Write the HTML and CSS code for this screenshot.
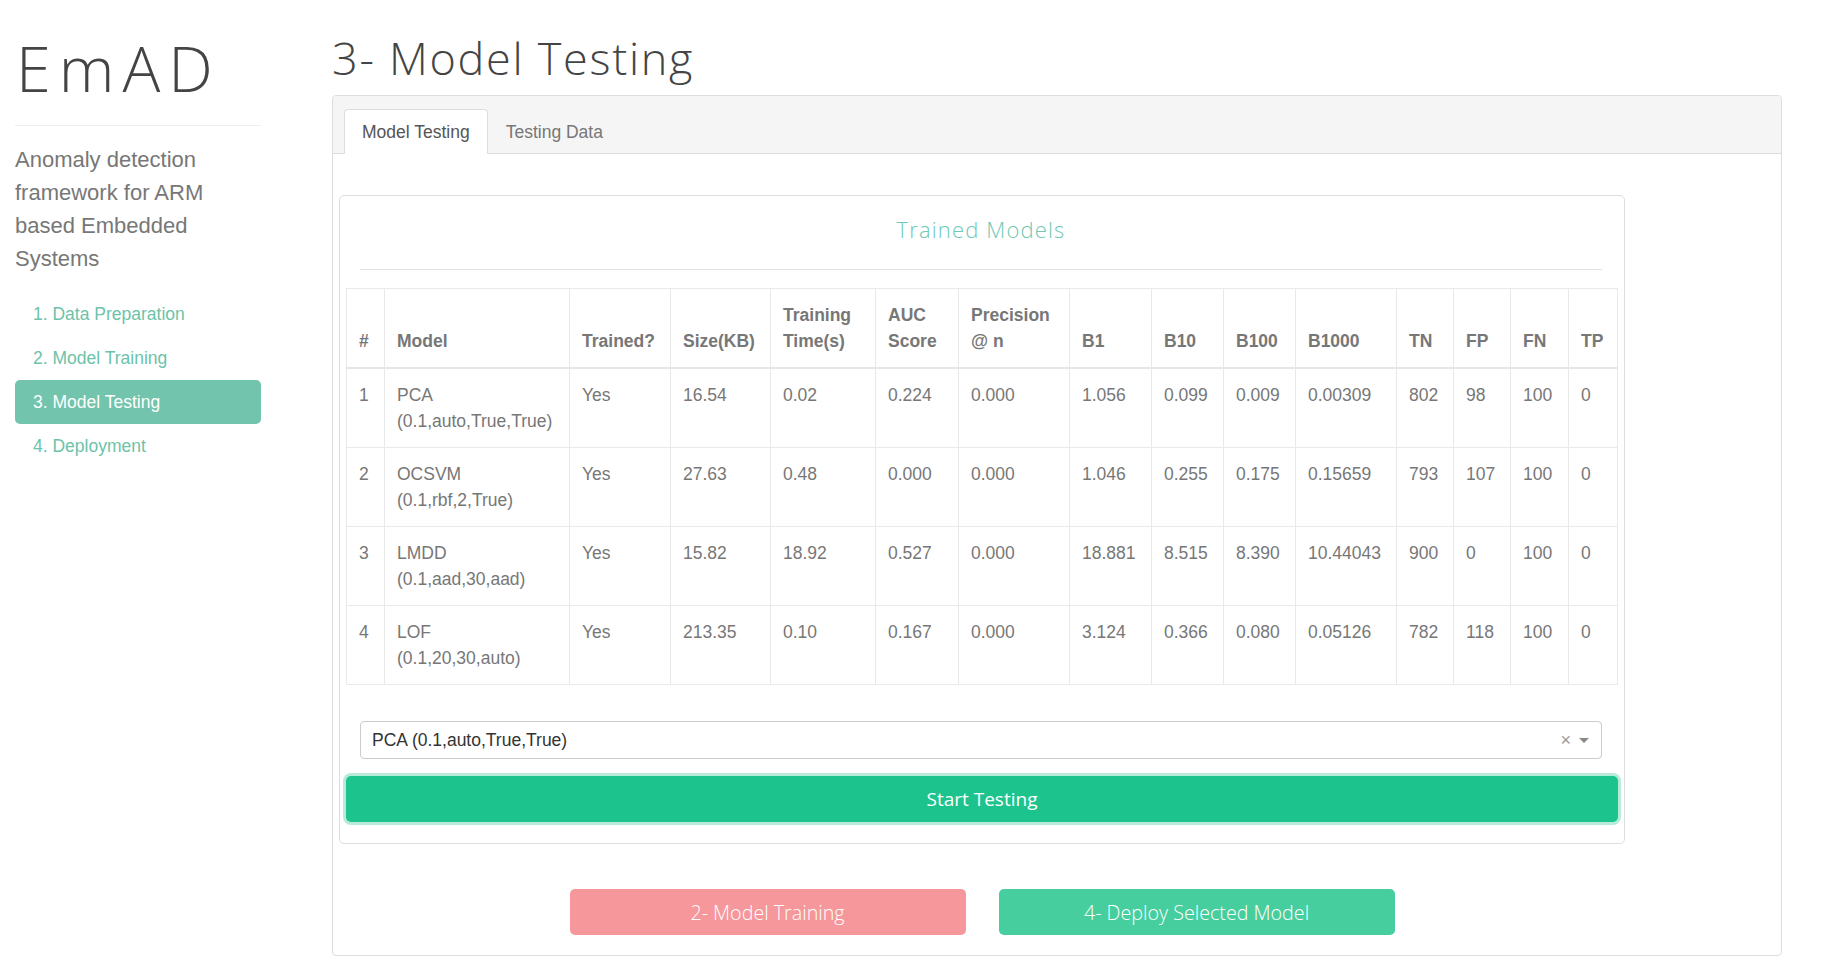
FILE: index.html
```html
<!DOCTYPE html>
<html lang="en">
<head>
<meta charset="utf-8">
<title>EmAD - Model Testing</title>
<link rel="stylesheet" href="styles.css">
</head>
<body>
<div class="page">
  <aside class="sidebar">
    <h1 class="brand">EmAD</h1>
    <hr class="brand-rule">
    <p class="tagline">Anomaly detection framework for ARM based Embedded Systems</p>
    <ul class="steps">
      <li><a class="step" href="#">1. Data Preparation</a></li>
      <li><a class="step" href="#">2. Model Training</a></li>
      <li><a class="step active" href="#">3. Model Testing</a></li>
      <li><a class="step" href="#">4. Deployment</a></li>
    </ul>
  </aside>
  <main class="main">
    <h2 class="page-title">3- Model Testing</h2>
    <section class="panel">
      <div class="tabs">
        <span class="tab active">Model Testing</span>
        <span class="tab">Testing Data</span>
      </div>
      <div class="panel-body">
        <div class="content">
          <div class="card">
            <h3 class="card-title">Trained Models</h3>
            <hr class="card-rule">
            <table class="models">
              <colgroup>
                <col class="c-idx"><col class="c-model"><col class="c-trained"><col class="c-size"><col class="c-time"><col class="c-auc"><col class="c-prec"><col class="c-b1"><col class="c-b10"><col class="c-b100"><col class="c-b1000"><col class="c-tn"><col class="c-fp"><col class="c-fn"><col class="c-tp">
              </colgroup>
              <thead>
                <tr>
                  <th>#</th><th>Model</th><th>Trained?</th><th>Size(KB)</th><th>Training Time(s)</th><th>AUC Score</th><th>Precision @ n</th><th>B1</th><th>B10</th><th>B100</th><th>B1000</th><th>TN</th><th>FP</th><th>FN</th><th>TP</th>
                </tr>
              </thead>
              <tbody>
                <tr>
                  <td>1</td><td>PCA<br>(0.1,auto,True,True)</td><td>Yes</td><td>16.54</td><td>0.02</td><td>0.224</td><td>0.000</td><td>1.056</td><td>0.099</td><td>0.009</td><td>0.00309</td><td>802</td><td>98</td><td>100</td><td>0</td>
                </tr>
                <tr>
                  <td>2</td><td>OCSVM<br>(0.1,rbf,2,True)</td><td>Yes</td><td>27.63</td><td>0.48</td><td>0.000</td><td>0.000</td><td>1.046</td><td>0.255</td><td>0.175</td><td>0.15659</td><td>793</td><td>107</td><td>100</td><td>0</td>
                </tr>
                <tr>
                  <td>3</td><td>LMDD<br>(0.1,aad,30,aad)</td><td>Yes</td><td>15.82</td><td>18.92</td><td>0.527</td><td>0.000</td><td>18.881</td><td>8.515</td><td>8.390</td><td>10.44043</td><td>900</td><td>0</td><td>100</td><td>0</td>
                </tr>
                <tr>
                  <td>4</td><td>LOF<br>(0.1,20,30,auto)</td><td>Yes</td><td>213.35</td><td>0.10</td><td>0.167</td><td>0.000</td><td>3.124</td><td>0.366</td><td>0.080</td><td>0.05126</td><td>782</td><td>118</td><td>100</td><td>0</td>
                </tr>
              </tbody>
            </table>
            <div class="select">
              <span class="select-value">PCA (0.1,auto,True,True)</span>
              <span class="select-clear">×</span>
              <span class="select-caret"></span>
            </div>
            <button class="btn-start" type="button">Start Testing</button>
          </div>
          <div class="actions">
            <button class="btn btn-back" type="button">2- Model Training</button>
            <button class="btn btn-deploy" type="button">4- Deploy Selected Model</button>
          </div>
        </div>
      </div>
    </section>
  </main>
</div>
</body>
</html>
```
FILE: styles.css
```css
* { box-sizing: border-box; }

html, body {
  margin: 0;
  padding: 0;
  background: #fff;
}

body {
  font-family: "Liberation Sans", Arial, sans-serif;
  font-size: 17.5px;
  color: #333;
}

.page {
  display: flex;
  align-items: flex-start;
}

/* ---------- sidebar ---------- */
.sidebar {
  flex: none;
  width: 261px;
  padding-left: 15px;
}

.brand {
  margin: 38px 0 0;
  font-family: "Open Sans", Inter, sans-serif;
  font-weight: 300;
  font-size: 63px;
  line-height: 60px;
  letter-spacing: 8px;
  color: #444;
  padding-left: 1px;
}

.brand-rule {
  margin: 27px 0 0;
  border: 0;
  border-top: 1px solid #eee;
  height: 0;
}

.tagline {
  margin: 17px 0 0;
  font-size: 22px;
  line-height: 33px;
  color: #777;
}

.steps {
  list-style: none;
  margin: 17px 0 0;
  padding: 0;
}

.step {
  display: block;
  height: 44px;
  line-height: 44px;
  padding: 0 18px;
  font-size: 17.5px;
  color: #6cc3a9;
  text-decoration: none;
  border-radius: 5px;
}

.step.active {
  background: #72c4ac;
  color: #fff;
}

/* ---------- main ---------- */
.main {
  flex: none;
  margin-left: 71px;
  width: 1450px;
}

.page-title {
  margin: 35px 0 15px;
  font-family: "Open Sans", Inter, sans-serif;
  font-weight: 300;
  font-size: 45px;
  line-height: 45px;
  letter-spacing: 1.7px;
  color: #444;
}

.panel {
  border: 1px solid #ddd;
  border-radius: 4px;
  overflow: hidden;
}

.tabs {
  display: flex;
  padding: 13px 11px 0;
  background: #f5f5f5;
  border-bottom: 1px solid #ddd;
}

.tab {
  height: 45px;
  margin-bottom: -1px;
  padding: 0 17px;
  line-height: 44px;
  font-size: 17.5px;
  color: #777;
  border: 1px solid transparent;
  border-radius: 4px 4px 0 0;
}

.tab.active {
  background: #fff;
  color: #555;
  border-color: #ddd;
  border-bottom-color: #fff;
}

.panel-body {
  padding: 41px 6px 20px;
}

.content {
  width: 1286px;
}

.card {
  border: 1px solid #ddd;
  border-radius: 5px;
  padding: 18px 22px 21px 20px;
}

.card-title {
  margin: 0;
  text-align: center;
  font-family: "Open Sans", Inter, sans-serif;
  font-weight: 300;
  font-size: 22px;
  line-height: 30px;
  letter-spacing: 1.15px;
  color: #6fc8b3;
}

.card-rule {
  margin: 25px 0 0;
  border: 0;
  border-top: 1px solid #e2e2e2;
  height: 0;
}

/* ---------- table ---------- */
.models {
  margin: 18px -16px 0 -14px;
  width: 1271px;
  table-layout: fixed;
  border-collapse: collapse;
  color: #777;
}

.c-idx { width: 38px; }
.c-model { width: 185px; }
.c-trained { width: 101px; }
.c-size { width: 100px; }
.c-time { width: 105px; }
.c-auc { width: 83px; }
.c-prec { width: 111px; }
.c-b1 { width: 82px; }
.c-b10 { width: 72px; }
.c-b100 { width: 72px; }
.c-b1000 { width: 101px; }
.c-tn { width: 57px; }
.c-fp { width: 57px; }
.c-fn { width: 58px; }
.c-tp { width: 49px; }

.models th,
.models td {
  border: 1px solid #e9e9e9;
  padding: 13px 11px 13px 12px;
  line-height: 26px;
  text-align: left;
  font-size: 17.5px;
}

.models th {
  vertical-align: bottom;
  font-weight: bold;
  border-bottom: 2px solid #e6e6e6;
}

.models td {
  vertical-align: top;
}

/* ---------- select ---------- */
.select {
  margin-top: 36px;
  height: 38px;
  display: flex;
  align-items: center;
  padding: 0 12px 0 11px;
  border: 1px solid #ccc;
  border-radius: 4px;
}

.select-value {
  flex: 1;
  color: #333;
}

.select-clear {
  color: #999;
  font-size: 18px;
  margin-right: 8px;
}

.select-caret {
  width: 0;
  height: 0;
  border-left: 5px solid transparent;
  border-right: 5px solid transparent;
  border-top: 5px solid #888;
}

/* ---------- buttons ---------- */
.btn-start {
  display: block;
  margin: 17px -16px 0 -14px;
  width: calc(100% + 30px);
  height: 46px;
  border: 0;
  border-radius: 5px;
  background: #1dc38d;
  box-shadow: 0 0 0 3px #b8eadb;
  color: #fff;
  font-family: "Open Sans", Inter, sans-serif;
  font-weight: 400;
  font-size: 19px;
}

.actions {
  display: flex;
  justify-content: center;
  gap: 33px;
  margin-top: 45px;
}

.btn {
  width: 396px;
  height: 46px;
  border: 0;
  border-radius: 5px;
  color: #fff;
  font-family: "Open Sans", Inter, sans-serif;
  font-weight: 300;
  font-size: 19.7px;
}

.btn-back { background: #f6979b; }
.btn-deploy { background: #47ce9e; }
```
